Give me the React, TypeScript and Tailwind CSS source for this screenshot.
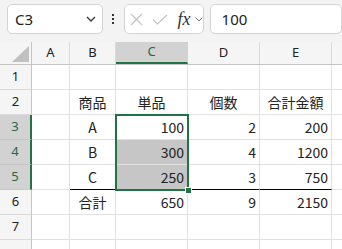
import React from "react";

const GREEN = "#217346";

type Cell = { t?: string; a?: "c" | "r"; sel?: boolean; blackB?: boolean };

const rows: Cell[][] = [
  [{}, {}, {}, {}, {}],
  [{}, { t: "商品", a: "c" }, { t: "単品", a: "c" }, { t: "個数", a: "c" }, { t: "合計金額", a: "c" }],
  [{}, { t: "A", a: "c" }, { t: "100", a: "r" }, { t: "2", a: "r" }, { t: "200", a: "r" }],
  [{}, { t: "B", a: "c" }, { t: "300", a: "r", sel: true }, { t: "4", a: "r" }, { t: "1200", a: "r" }],
  [{}, { t: "C", a: "c", blackB: true }, { t: "250", a: "r", sel: true, blackB: true }, { t: "3", a: "r", blackB: true }, { t: "750", a: "r", blackB: true }],
  [{}, { t: "合計", a: "c" }, { t: "650", a: "r" }, { t: "9", a: "r" }, { t: "2150", a: "r" }],
  [{}, {}, {}, {}, {}],
  [{}, {}, {}, {}, {}],
];

const colW = ["w-[38px]", "w-[46px]", "w-[72px]", "w-[72px]", "w-[72px]"];

export default function App() {
  return (
    <div
      className="w-[342px] h-[249px] overflow-hidden bg-white relative text-[#222]"
      style={{ fontFamily: '"Noto Sans", "Noto Sans CJK JP", sans-serif' }}
    >
      {/* top bar */}
      <div className="h-[42px] bg-[#f3f3f3] flex items-start pt-[4px] pl-[7px]">
        <div className="w-[101px] h-[30px] bg-white border border-[#d4d4d4] rounded-[5px] flex items-center pl-[7px] pr-[6px]">
          <span className="text-[15px] text-[#222] flex-1" style={{ fontFamily: '"Noto Sans", sans-serif' }}>C3</span>
          <svg width="10" height="6" viewBox="0 0 10 6">
            <path d="M1 1 L5 5 L9 1" fill="none" stroke="#333" strokeWidth="1.3" />
          </svg>
        </div>
        <div className="w-[22px] h-[30px] flex flex-col items-center justify-center gap-[2px]">
          <div className="w-[2px] h-[2px] bg-[#333]" />
          <div className="w-[2px] h-[2px] bg-[#333]" />
          <div className="w-[2px] h-[2px] bg-[#333]" />
        </div>
        <div className="w-[84px] h-[30px] bg-white border border-[#d4d4d4] rounded-[5px] flex items-center pl-[5px]">
          <svg width="13" height="13" viewBox="0 0 13 13" className="mr-[9px]">
            <path d="M1 1 L12 12 M12 1 L1 12" stroke="#c4c4c4" strokeWidth="1.2" fill="none" />
          </svg>
          <svg width="16" height="11" viewBox="0 0 16 11" className="mr-[10px]">
            <path d="M1 5.5 L5.5 10 L15 1" stroke="#c4c4c4" strokeWidth="1.2" fill="none" />
          </svg>
          <span
            className="italic text-[18px] leading-none text-[#333] mr-[4px]"
            style={{ fontFamily: '"Liberation Serif", serif' }}
          >
            fx
          </span>
          <svg width="8" height="5" viewBox="0 0 8 5">
            <path d="M0.5 0.5 L4 4 L7.5 0.5" fill="none" stroke="#777" strokeWidth="1" />
          </svg>
        </div>
        <div className="ml-[6px] w-[140px] h-[30px] bg-white border border-[#d4d4d4] rounded-[5px] flex items-center pl-[11px]">
          <span className="text-[15px] text-[#222]">100</span>
        </div>
      </div>

      {/* header row */}
      <div className="flex h-[23px] bg-[#f5f5f5] border-b border-[#c4c4c4] text-[13px]">
        <div className="w-[32px] border-r border-[#c4c4c4] relative">
          <svg width="17" height="16" viewBox="0 0 17 16" className="absolute left-[12px] top-[4px]">
            <path d="M0 16 L17 16 L17 0 Z" fill="#c0c0c0" />
          </svg>
        </div>
        {["A", "B", "C", "D", "E"].map((c, i) => (
          <div
            key={c}
            className={`${colW[i]} flex items-center justify-center border-r ${
              c === "C" ? "bg-[#d2d2d2] border-[#d2d2d2] text-[#1e6b41] border-b-2 border-b-[#217346]" : "border-[#dadada]"
            }`}
          >
            {c}
          </div>
        ))}
        <div className="flex-1" />
      </div>

      {/* rows */}
      {rows.map((r, ri) => {
        const selRow = ri >= 2 && ri <= 4;
        return (
          <div key={ri} className="flex h-[25px]">
            <div
              className={`w-[32px] flex items-center justify-center text-[13px] border-b ${
                selRow
                  ? "bg-[#d2d2d2] text-[#1e6b41] border-b-[#c6c6c6] border-r-2 border-r-[#217346]"
                  : "bg-[#f5f5f5] border-b-[#dadada] border-r border-r-[#c4c4c4]"
              }`}
            >
              {ri < 7 ? ri + 1 : ""}
            </div>
            {r.map((c, ci) => (
              <div
                key={ci}
                className={`${colW[ci]} flex items-center text-[14px] border-r border-r-[#e1e1e1] border-b ${
                  c.blackB ? "border-b-black" : "border-b-[#e1e1e1]"
                } ${c.a === "r" ? "justify-end pr-[3px]" : "justify-center"} ${c.sel ? "bg-[#c6c6c6]" : ""}`}
                style={{ fontFamily: '"Noto Sans CJK JP", "Noto Sans", sans-serif' }}
              >
                {c.t}
              </div>
            ))}
            <div className="flex-1 border-b border-b-[#e1e1e1]" />
          </div>
        );
      })}

      {/* selection overlay */}
      <div
        className="absolute left-[115px] top-[114px] w-[74px] h-[77px] border-2 pointer-events-none"
        style={{ borderColor: GREEN }}
      />
      <div className="absolute left-[185px] top-[187px] w-[7px] h-[7px] bg-[#217346] border border-white" />
    </div>
  );
}
